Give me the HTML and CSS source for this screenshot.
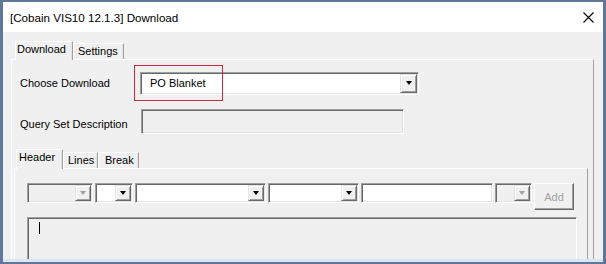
FILE: index.html
```html
<!DOCTYPE html>
<html lang="en">
<head>
  <meta charset="utf-8">
  <title>Download</title>
  <link rel="stylesheet" href="styles.css">
</head>
<body>
  <div class="window">
    <div class="titlebar">
      <span class="title">[Cobain VIS10 12.1.3] Download</span>
      <svg class="close" width="11" height="11" viewBox="0 0 11 11">
        <path d="M0.5 0.5 L10.5 10.5 M10.5 0.5 L0.5 10.5" stroke="#000" stroke-width="1.1" fill="none"/>
      </svg>
    </div>

    <div class="client">
      <div class="tabs">
        <div class="tab active tab-download">Download</div>
        <div class="tab tab-settings">Settings</div>
      </div>

      <div class="tabpanel">
        <div class="field-row">
          <span class="field-label">Choose Download</span>
          <div class="combo combo-main">
            <span class="combo-value">PO Blanket</span>
            <span class="drop"><i class="caret-down"></i></span>
            <div class="highlight"></div>
          </div>
        </div>

        <div class="field-row field-row-query">
          <span class="field-label">Query Set Description</span>
          <div class="textbox textbox-query"></div>
        </div>

        <div class="subsection">
          <div class="tabs tabs-sub">
            <div class="tab active tab-header">Header</div>
            <div class="tab tab-lines">Lines</div>
            <div class="tab tab-break">Break</div>
          </div>

          <div class="tabpanel tabpanel-inner">
            <div class="filter-row">
              <div class="combo disabled w-66"><span class="combo-value"></span><span class="drop"><i class="caret-down"></i></span></div>
              <div class="combo w-38"><span class="combo-value"></span><span class="drop"><i class="caret-down"></i></span></div>
              <div class="combo w-131"><span class="combo-value"></span><span class="drop"><i class="caret-down"></i></span></div>
              <div class="combo w-91"><span class="combo-value"></span><span class="drop"><i class="caret-down"></i></span></div>
              <div class="textbox w-132"></div>
              <div class="combo disabled w-37"><span class="combo-value"></span><span class="drop"><i class="caret-down"></i></span></div>
              <button class="btn" disabled>Add</button>
            </div>

            <div class="editor"><span class="text-caret"></span></div>
          </div>
        </div>
      </div>
    </div>
  </div>
</body>
</html>
```

FILE: styles.css
```css
* {
  box-sizing: border-box;
}

html, body {
  margin: 0;
  height: 100%;
}

body {
  width: 606px;
  height: 264px;
  overflow: hidden;
  font-family: "Liberation Sans", Arial, sans-serif;
  font-size: 11px;
  color: #000;
  background: #5f7799;
}

.window {
  height: 264px;
  display: flex;
  flex-direction: column;
  border-style: solid;
  border-color: #5f7799;
  border-width: 2px 3px 2px 3px;
}

/* title bar */
.titlebar {
  flex: none;
  height: 30px;
  background: #fff;
  display: flex;
  align-items: center;
  justify-content: space-between;
  padding: 0 9px 0 7px;
}
.title {
  font-size: 11.6px;
}
.close {
  display: block;
}

/* client area */
.client {
  flex: 1;
  min-height: 0;
  overflow: hidden;
  background: #f0f0f0;
  padding: 9px 9px 0 8px;
  border-bottom: 3px solid #dbe5f3;
}

/* tabs */
.tabs {
  display: flex;
  align-items: flex-end;
  padding-left: 4px;
}
.tab {
  position: relative;
  height: 16px;
  line-height: 14px;
  border: 1px solid;
  border-bottom: 0;
  border-color: #fff #a0a0a0 transparent #fff;
  box-shadow: inset -1px 0 #e3e3e3;
  padding-left: 4px;
  white-space: nowrap;
}
.tab.active {
  height: 19px;
  margin-bottom: -1px;
  background: #f0f0f0;
  z-index: 1;
  padding-left: 1px;
}
.tab-download { width: 58px; }
.tab-settings { width: 51px; }

.tabpanel {
  border: 1px solid;
  border-color: #fff #a0a0a0 #a0a0a0 #fff;
  padding: 12px 0 0 0;
  height: 240px;
}

/* form rows */
.field-row {
  display: flex;
  align-items: center;
  height: 22px;
  padding-left: 8px;
}
.field-row-query {
  margin-top: 15px;
  height: 25px;
}
.field-row-query .field-label {
  padding-top: 5px;
}
.field-label {
  width: 120px;
  flex: none;
}

/* combo boxes */
.combo {
  position: relative;
  display: flex;
  height: 20px;
  padding: 1px;
  background: #fff;
  border: 1px solid;
  border-color: #a0a0a0 #fff #fff #a0a0a0;
  box-shadow: inset 1px 1px #696969, inset -1px -1px #e3e3e3;
  flex: none;
}
.combo-value {
  flex: 1;
  padding-left: 8px;
  line-height: 18px;
}
.drop {
  width: 16px;
  flex: none;
  display: flex;
  align-items: center;
  justify-content: center;
  background: #f0f0f0;
  border: 1px solid;
  border-color: #e3e3e3 #696969 #696969 #e3e3e3;
  box-shadow: inset 1px 1px #fff, inset -1px -1px #a0a0a0;
}
.caret-down {
  width: 0;
  height: 0;
  border-top: 4px solid #000;
  border-left: 3.5px solid transparent;
  border-right: 3.5px solid transparent;
}
.combo.disabled {
  background: #f0f0f0;
}
.combo.disabled .caret-down {
  border-top-color: #a0a0a0;
}

.combo-main {
  width: 279px;
  height: 23px;
}
.combo-main .drop {
  width: 17px;
}

.highlight {
  position: absolute;
  left: -7px;
  top: -8px;
  width: 89px;
  height: 36px;
  border: 1px solid #cc2a41;
  pointer-events: none;
}

/* text boxes */
.textbox {
  height: 20px;
  background: #fff;
  border: 1px solid;
  border-color: #a0a0a0 #fff #fff #a0a0a0;
  box-shadow: inset 1px 1px #696969, inset -1px -1px #e3e3e3;
  flex: none;
}
.textbox-query {
  width: 263px;
  height: 25px;
  margin-left: 1px;
  background: #f0f0f0;
}

/* inner tab section */
.subsection {
  margin: 15px 5px 0 2px;
}
.tabs-sub {
  padding-left: 2px;
}
.tabs-sub .tab.active {
  height: 20px;
  padding-left: 2px;
}
.tab-header { width: 47px; }
.tab-lines { width: 35px; }
.tab-break { width: 41px; padding-left: 6px; }

.tabpanel-inner {
  padding: 14px 0 0 12px;
  height: 120px;
}

.filter-row {
  display: flex;
  align-items: flex-start;
  gap: 2px;
}
.w-66 { width: 66px; }
.w-38 { width: 38px; }
.w-131 { width: 131px; }
.w-91 { width: 91px; }
.w-132 { width: 132px; }
.w-37 { width: 37px; }

.btn {
  width: 40px;
  height: 27px;
  font-family: inherit;
  font-size: 11px;
  color: #a0a0a0;
  background: #f0f0f0;
  border: 1px solid;
  border-color: #fff #696969 #696969 #fff;
  box-shadow: inset -1px -1px #a0a0a0;
  padding: 0;
}

.editor {
  width: 550px;
  height: 60px;
  margin-top: 7px;
  background: #f0f0f0;
  border: 1px solid;
  border-color: #a0a0a0 #fff #fff #a0a0a0;
  box-shadow: inset 1px 1px #696969;
  padding: 4px 0 0 11px;
}
.text-caret {
  display: block;
  width: 1px;
  height: 12px;
  background: #000;
}
```
